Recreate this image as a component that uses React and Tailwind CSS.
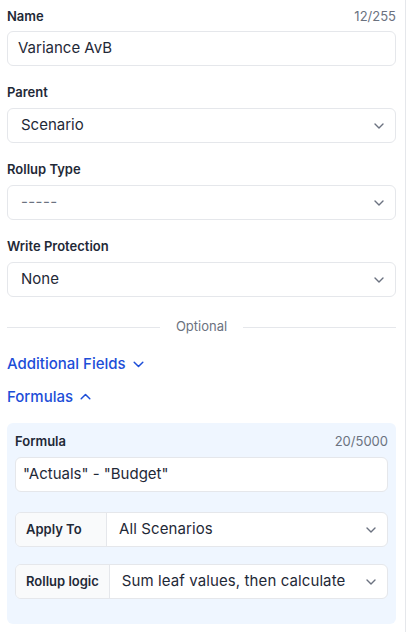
import React from "react";

function Chevron({ up = false, className = "" }) {
  return (
    <svg width="10" height="6" viewBox="0 0 10 6" fill="none" className={className}>
      <path
        d={up ? "M1 5 L5 1 L9 5" : "M1 1 L5 5 L9 1"}
        stroke="currentColor"
        strokeWidth="1.4"
        strokeLinecap="round"
        strokeLinejoin="round"
      />
    </svg>
  );
}

function BigChevron({ up = false, className = "" }) {
  return (
    <svg width="11" height="7" viewBox="0 0 11 7" fill="none" className={className}>
      <path
        d={up ? "M1.2 5.8 L5.5 1.5 L9.8 5.8" : "M1.2 1.2 L5.5 5.5 L9.8 1.2"}
        stroke="currentColor"
        strokeWidth="1.5"
        strokeLinecap="round"
        strokeLinejoin="round"
      />
    </svg>
  );
}

function Label({ children, right, className = "" }) {
  return (
    <div className={"flex h-4 items-center justify-between " + className}>
      <span className="text-[13px] font-semibold leading-4 text-[#1f2937]">{children}</span>
      {right && <span className="text-[13px] leading-4 text-[#6b7280]">{right}</span>}
    </div>
  );
}

function Select({ value, muted = false }) {
  return (
    <div className="mt-2 flex h-[35px] items-center justify-between rounded-md border border-[#e5e7eb] bg-white pl-[13px] pr-[11px]">
      <span className={"text-[15px] " + (muted ? "text-[#6b7280] tracking-[0.4px]" : "text-[#1f2937]")}>{value}</span>
      <Chevron className="text-[#6b7280]" />
    </div>
  );
}

function Group({ label, value, className = "", addonClass = "" }) {
  return (
    <div className={"flex h-[35px] overflow-hidden rounded-md border border-[#e5e7eb] bg-white " + className}>
      <div className={"flex shrink-0 items-center border-r border-[#e5e7eb] bg-[#f9fafb] px-[10px] text-[13px] font-semibold text-[#1f2937] " + addonClass}>
        {label}
      </div>
      <div className="flex flex-1 items-center justify-between pl-[12px] pr-[11px]">
        <span className="text-[15px] tracking-[0.1px] text-[#1f2937]">{value}</span>
        <Chevron className="text-[#6b7280]" />
      </div>
    </div>
  );
}

export default function App() {
  return (
    <div
      className="h-[632px] w-[407px] bg-white"
      style={{ fontFamily: "Inter, 'Noto Sans', sans-serif" }}
    >
      <div className="h-full w-[406px] border-r border-[#e5e7eb] pl-[7px] pr-[9px] pt-[8px]">
        <Label right="12/255">Name</Label>
        <div className="mt-[7px] flex h-[35px] items-center rounded-md border border-[#e5e7eb] bg-white px-[10px] text-[15px] text-[#1f2937]">
          Variance AvB
        </div>

        <Label className="mt-[18px]">Parent</Label>
        <Select value="Scenario" />

        <Label className="mt-[18px]">Rollup Type</Label>
        <Select value="-----" muted />

        <Label className="mt-[18px]">Write Protection</Label>
        <Select value="None" />

        <div className="mt-[20px] flex h-5 items-center gap-4">
          <div className="h-px flex-1 bg-[#e5e7eb]" />
          <span className="text-[13px] text-[#6b7280]">Optional</span>
          <div className="h-px flex-1 bg-[#e5e7eb]" />
        </div>

        <div className="mt-[17px] flex h-5 items-center gap-[7px] text-[15px] font-medium text-[#1d4ed8]">
          Additional Fields
          <BigChevron className="mt-px" />
        </div>
        <div className="mt-[13px] flex h-5 items-center gap-[7px] text-[15px] font-medium text-[#1d4ed8]">
          Formulas
          <BigChevron up className="-mt-px" />
        </div>

        <div className="mt-[16px] rounded-md bg-[#eff6ff] px-2 pb-[25px] pt-[10px]">
          <Label right="20/5000">Formula</Label>
          <div className="mt-2 flex h-[35px] items-center rounded-md border border-[#e5e7eb] bg-white px-[7px] text-[15px] text-[#1f2937]">
            "Actuals" - "Budget"
          </div>
          <Group className="mt-[20px]" addonClass="w-[91px]" label="Apply To" value="All Scenarios" />
          <Group className="mt-[17px]" label="Rollup logic" value="Sum leaf values, then calculate" />
        </div>
      </div>
    </div>
  );
}
